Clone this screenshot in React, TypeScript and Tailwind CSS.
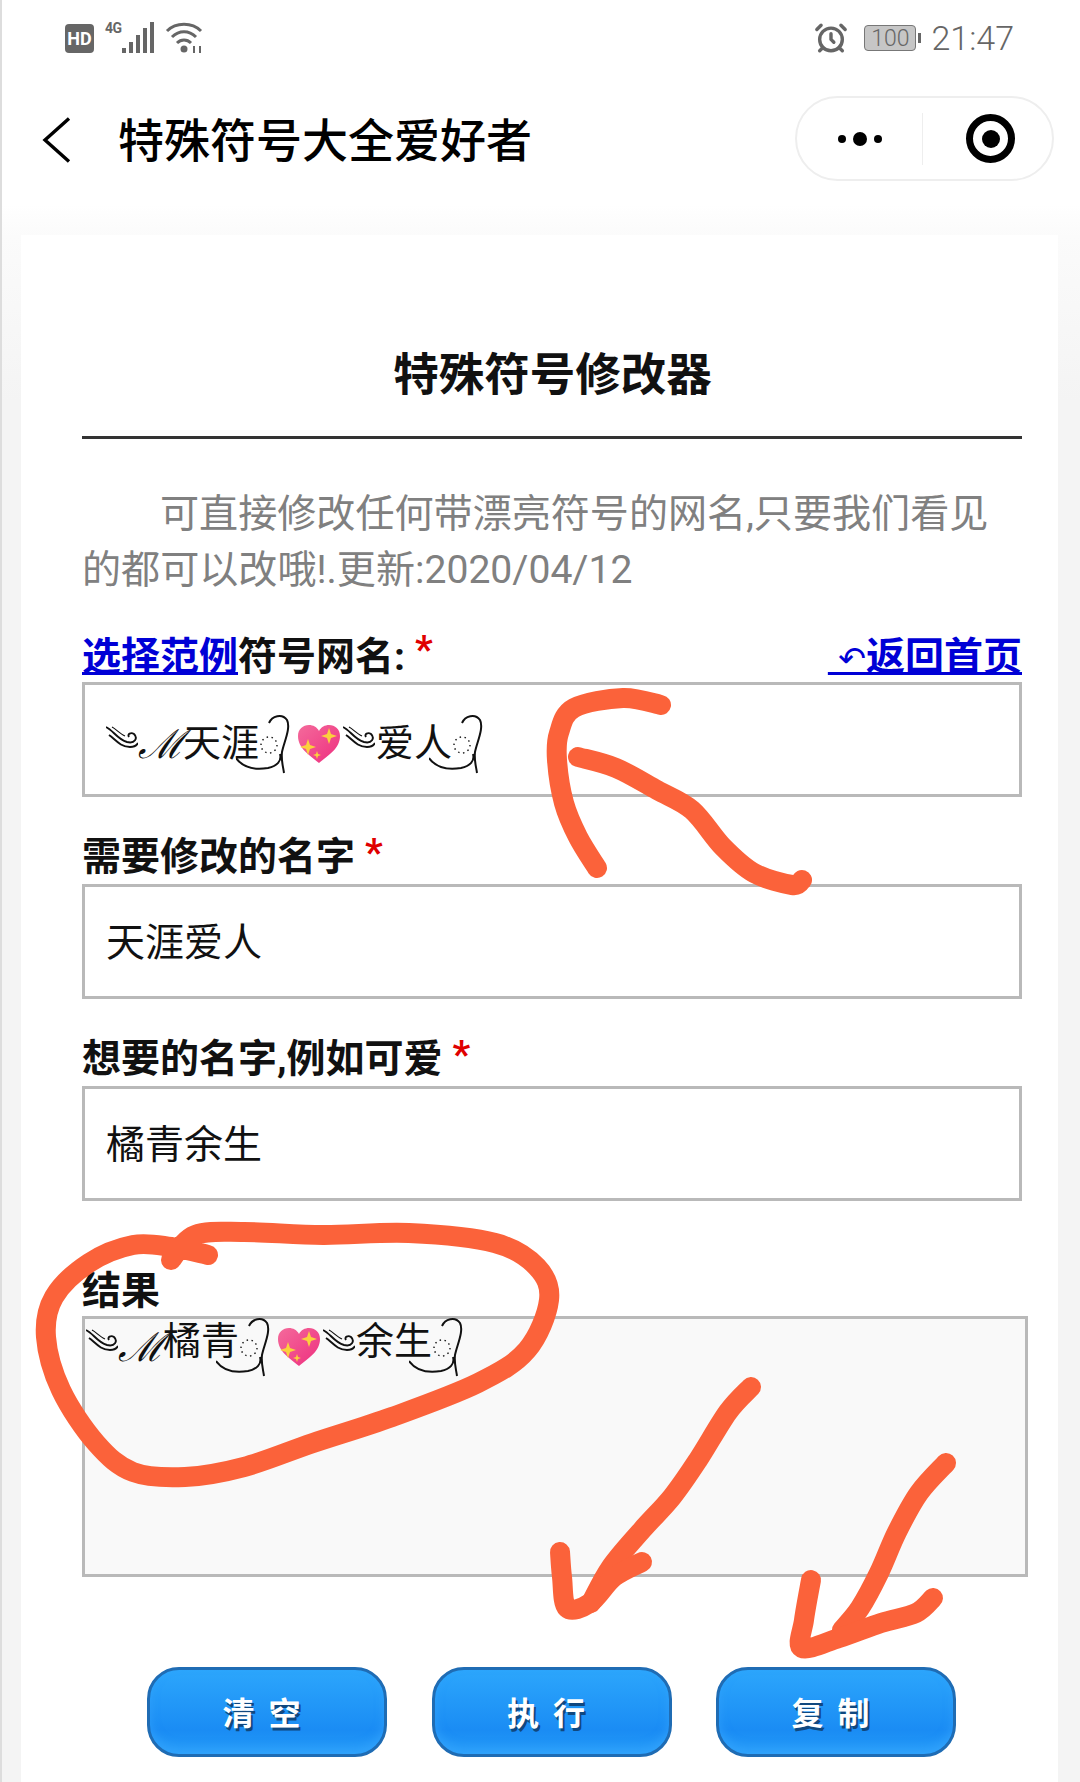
import { AlarmClock } from 'lucide-react';

type Point = [number, number];

// hand drawn marks on top of the screenshot, in page coordinates
const scribbles: Point[][] = [
  [[661, 705], [623, 698], [574, 708], [559, 733], [557, 760], [564, 803], [578, 837], [597, 868]],
  [[578, 757], [616, 768], [657, 790], [692, 810], [723, 847], [754, 873], [792, 885], [802, 880]],
  [
    [208, 1255], [171, 1247], [133, 1245], [89, 1263], [54, 1297], [46, 1337], [61, 1390], [96, 1443],
    [133, 1472], [185, 1477], [244, 1467], [313, 1443], [392, 1417], [478, 1383], [527, 1350], [549, 1300],
    [537, 1267], [495, 1243], [409, 1233], [323, 1235], [244, 1232], [195, 1235], [171, 1260],
  ],
  [[751, 1387], [728, 1412], [698, 1460], [672, 1497], [642, 1530], [611, 1567], [591, 1603]],
  [[560, 1552], [562, 1577], [567, 1608], [590, 1603], [614, 1577], [642, 1562]],
  [[946, 1463], [919, 1493], [897, 1532], [879, 1573], [860, 1608], [842, 1630]],
  [[811, 1580], [804, 1620], [802, 1648], [839, 1638], [881, 1623], [916, 1613], [933, 1598]],
];

function smooth(points: Point[]) {
  let d = `M${points[0][0]} ${points[0][1]}`;
  for (let i = 0; i < points.length - 1; i++) {
    const p0 = points[Math.max(i - 1, 0)];
    const p1 = points[i];
    const p2 = points[i + 1];
    const p3 = points[Math.min(i + 2, points.length - 1)];
    d += ` C${p1[0] + (p2[0] - p0[0]) / 6} ${p1[1] + (p2[1] - p0[1]) / 6} ${p2[0] - (p3[0] - p1[0]) / 6} ${p2[1] - (p3[1] - p1[1]) / 6} ${p2[0]} ${p2[1]}`;
  }
  return d;
}

function Swirl() {
  return (
    <svg viewBox="0 0 32 24" className="h-6 w-8 shrink-0 -translate-y-1.5" fill="none" stroke="#111" strokeWidth="1.9">
      <path d="M0 1C7 4 11 13 21 16C29 18 32 12 28 8C25 6 21 8 23 11" />
      <path d="M3 9C9 13 14 21 24 21C28 21 31 19 32 17" />
      <path d="M6 1C10 3 14 8 19 10" strokeWidth="1.2" />
    </svg>
  );
}

function Flourish() {
  return (
    <svg viewBox="0 0 54 60" className="-ml-[23px] h-[60px] w-[54px] shrink-0" fill="none" stroke="#111" strokeWidth="2">
      <path d="M0 44C8 55 20 56 32 54C41 52 46 47 44 40" />
      <path d="M33 9C36 2 46 -1 51 6C55 14 48 28 46 38C45 46 47 52 48 59" />
      <circle cx="33" cy="31" r="8" strokeDasharray="1.5 3.5" strokeWidth="1.4" />
    </svg>
  );
}

function SparkleHeart() {
  return (
    <svg viewBox="0 0 44 40" className="ml-[7px] h-10 w-11 shrink-0">
      <defs>
        <linearGradient id="heartFill" x1="0" y1="0" x2="1" y2="1">
          <stop offset="0" stopColor="#f46a9b" />
          <stop offset="1" stopColor="#ee2f7f" />
        </linearGradient>
      </defs>
      <path d="M22 39C12 31 1 24 1 12C1 5 6 1 12 1C16 1 20 3 22 7C24 3 28 1 32 1C38 1 43 5 43 12C43 24 32 31 22 39Z" fill="url(#heartFill)" />
      <path d="M11 15L13 21L19 23L13 25L11 31L9 25L3 23L9 21Z" fill="#fbd13c" />
      <path d="M32 4L34 10L40 12L34 14L32 20L30 14L24 12L30 10Z" fill="#fbd13c" />
      <path d="M20 27L21 30L24 31L21 32L20 35L19 32L16 31L19 30Z" fill="#fbd13c" />
    </svg>
  );
}

function FancyName({ first, second, textClass = '' }: { first: string; second: string; textClass?: string }) {
  return (
    <div className="flex h-[60px] items-center text-[38px] text-[#111]">
      <Swirl />
      <span className="w-[42px] shrink-0 text-center font-['DejaVu_Serif',serif] text-[40px] italic leading-none">ℳ</span>
      <span className={`ml-[3px] ${textClass}`}>{first}</span>
      <Flourish />
      <SparkleHeart />
      <span className="ml-[2px] flex items-center">
        <Swirl />
      </span>
      <span className={`ml-[1px] ${textClass}`}>{second}</span>
      <Flourish />
    </div>
  );
}

function Required({ up }: { up?: boolean }) {
  return <span className={`ml-[10px] text-[#e00000] ${up ? '-translate-y-[7px]' : '-translate-y-[4px]'}`}>*</span>;
}

function ActionButton({ label }: { label: string }) {
  return (
    <button
      type="button"
      className="h-[90px] w-[240px] rounded-[32px] border-[3px] border-[#1f6cb4] bg-[linear-gradient(#2ca6fc,#1a8cf4_72%,#259cf8)] pr-[8px] pt-[4px] text-[32px] font-bold tracking-[3px] text-white shadow-[inset_0_-6px_10px_rgba(60,170,255,0.5)] [text-shadow:2px_3px_0_#10487f]"
    >
      {label}
    </button>
  );
}

function StatusBar() {
  return (
    <div className="flex h-[76px] items-center pl-[63px] pr-[66px] text-[#666]">
      <span className="flex h-[29px] w-[29px] items-center justify-center rounded-[4px] bg-[#666] text-[18px] font-bold text-white">HD</span>
      <span className="ml-[11px] w-[17px] self-start pt-[21px] text-[14px] font-bold leading-none tracking-[-0.5px]">4G</span>
      <svg viewBox="0 0 35 32" className="h-8 w-[35px]" fill="#666">
        <rect x="0" y="26" width="4" height="5" />
        <rect x="7" y="20" width="4" height="11" />
        <rect x="14" y="13" width="4" height="18" />
        <rect x="21" y="6" width="4" height="25" />
        <rect x="28" y="0" width="4" height="31" />
      </svg>
      <svg viewBox="0 0 40 32" className="ml-[8px] h-8 w-10" fill="none" stroke="#666" strokeWidth="3">
        <path d="M2 9C11 0 27 0 36 9" />
        <path d="M7 15C14 8 24 8 31 15" />
        <path d="M12 21C16 17 22 17 26 21" />
        <circle cx="19" cy="27" r="3.5" fill="#666" stroke="none" />
        <path d="M29 24V31M35 24V31" strokeWidth="2" />
      </svg>
      <AlarmClock className="ml-auto h-[34px] w-[34px]" strokeWidth={2.4} />
      <span className="relative ml-[16px] flex h-[26px] w-[52px] items-center justify-center rounded-[4px] border border-[#777] bg-[#c6c6c6] font-['Roboto',sans-serif] text-[23px] font-light leading-none">
        100
        <span className="absolute -right-[6px] top-[7px] h-[10px] w-[3px] bg-[#666]" />
      </span>
      <span className="ml-[15px] font-['Roboto',sans-serif] text-[34px] font-light leading-none">21:47</span>
    </div>
  );
}

function NavBar() {
  return (
    <div className="flex h-[129px] items-center pl-[34px] pr-[26px]">
      <svg viewBox="0 0 44 56" className="h-14 w-11" fill="none" stroke="#000" strokeWidth="3.4">
        <path d="M33 5.5L9 27L33 48.5" />
      </svg>
      <h1 className="ml-[38px] text-[46px] font-medium leading-none text-black">特殊符号大全爱好者</h1>
      <div className="mb-[4px] ml-auto flex h-[85px] w-[259px] items-center rounded-full border-2 border-[#eeeeee]">
        <div className="flex w-[125px] items-center justify-center gap-[7px]">
          <span className="h-2 w-2 rounded-full bg-black" />
          <span className="h-[14px] w-[14px] rounded-full bg-black" />
          <span className="h-2 w-2 rounded-full bg-black" />
        </div>
        <div className="h-[52px] w-px bg-[#eeeeee]" />
        <div className="flex flex-1 items-center justify-center pl-[6px]">
          <div className="flex h-[49px] w-[49px] items-center justify-center rounded-full border-[7px] border-black">
            <span className="h-[18px] w-[18px] rounded-full bg-black" />
          </div>
        </div>
      </div>
    </div>
  );
}

export default function App() {
  return (
    <div className="relative h-[1782px] w-[1080px] overflow-hidden border-l-2 border-[#dddddd] bg-[linear-gradient(#ffffff_205px,#fbfbfb_236px,#f4f4f4_400px)] font-['Roboto','Noto_Sans_CJK_SC',sans-serif]">
      <StatusBar />
      <NavBar />

      <main className="ml-[19px] mt-[30px] h-[1547px] w-[1037px] bg-white pl-[61px] pr-[35px]">
        <h2 className="pt-[110px] text-center text-[45.5px] font-bold leading-[62px] text-[#111]">特殊符号修改器</h2>
        <div className="mt-[29px] h-[3px] w-[940px] bg-[#333]" />
        <p className="mt-[47px] w-[940px] indent-[78px] text-[39.1px] leading-[56px] text-[#808080]">
          可直接修改任何带漂亮符号的网名,只要我们看见的都可以改哦!.更新:2020/04/12
        </p>

        <div className="mt-[28px] flex h-[56px] w-[940px] items-center justify-between pt-[7px] text-[39px] font-bold text-[#111]">
          <div className="flex items-center">
            <span className="text-[#0000d6] underline">选择范例</span>符号网名:<Required up />
          </div>
          <span className="text-[#0000d6] underline">
            <span className="font-['DejaVu_Sans',sans-serif] text-[33px] font-normal">{'\u00a0↶'}</span>返回首页
          </span>
        </div>
        <div className="flex h-[115px] w-[940px] items-center border-[3px] border-[#b9b9b9] pl-[21px] pt-[8px]">
          <FancyName first="天涯" second="爱人" />
        </div>

        <label className="mt-[27px] flex h-[60px] items-center pt-[7px] text-[39px] font-bold text-[#111]">
          需要修改的名字<Required />
        </label>
        <input
          readOnly
          value="天涯爱人"
          className="block h-[115px] w-[940px] border-[3px] border-[#b9b9b9] pb-[6px] pl-[21px] text-[39px] text-[#111]"
        />

        <label className="mt-[27px] flex h-[60px] items-center pt-[6px] text-[39px] font-bold text-[#111]">
          想要的名字,例如可爱<Required />
        </label>
        <input
          readOnly
          value="橘青余生"
          className="block h-[115px] w-[940px] border-[3px] border-[#b9b9b9] pb-[6px] pl-[21px] text-[39px] text-[#111]"
        />

        <label className="mt-[60px] flex h-[55px] items-center pt-[6px] text-[39px] font-bold text-[#111]">结果</label>
        <div className="h-[261px] w-[946px] border-[3px] border-[#b9b9b9] bg-[#f9f9f9] pl-[1px]">
          <div className="-mt-[2px]">
            <FancyName first="橘青" second="余生" textClass="-translate-y-[6px]" />
          </div>
        </div>

        <div className="mt-[90px] flex w-[874px] justify-between pl-[65px]">
          <ActionButton label="清 空" />
          <ActionButton label="执 行" />
          <ActionButton label="复 制" />
        </div>
      </main>

      <svg viewBox="0 0 1080 1782" className="pointer-events-none absolute -left-[2px] top-0 h-[1782px] w-[1080px]" fill="none" stroke="#fb623a" strokeWidth="20" strokeLinecap="round" strokeLinejoin="round">
        {scribbles.map((points, i) => (
          <path key={i} d={smooth(points)} />
        ))}
      </svg>
    </div>
  );
}
